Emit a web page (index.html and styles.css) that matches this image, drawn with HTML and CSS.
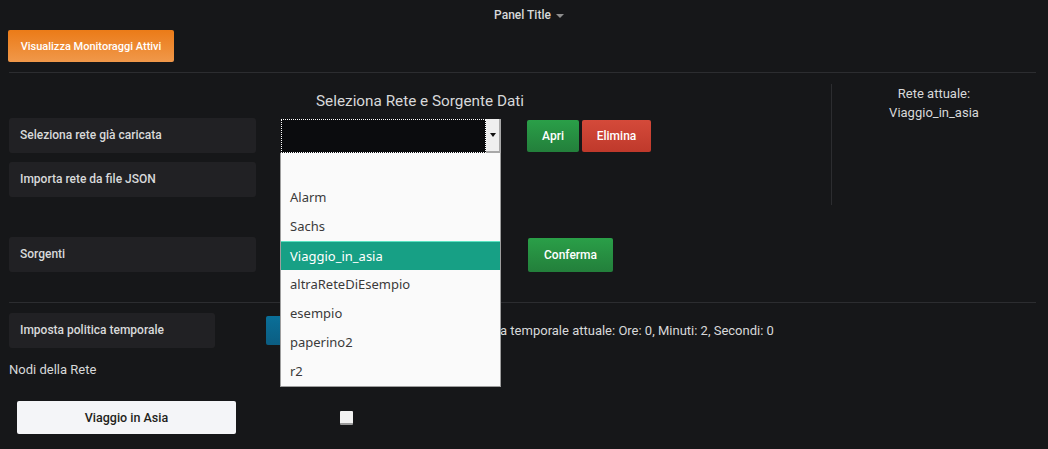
FILE: index.html
```html
<!DOCTYPE html>
<html lang="it">
<head>
<meta charset="utf-8">
<title>Panel</title>
<link rel="stylesheet" href="styles.css">
</head>
<body>
<div class="panel">
  <div class="panel-header">
    <span class="panel-title">Panel Title</span><span class="caret"></span>
  </div>
  <div class="panel-body">
    <div class="top-row">
      <button class="btn btn-orange">Visualizza Monitoraggi Attivi</button>
    </div>
    <div class="hr"></div>
    <div class="section">
      <div class="section-main">
        <div class="section-title">Seleziona Rete e Sorgente Dati</div>
        <div class="form-row row1">
          <div class="label">Seleziona rete già caricata</div>
          <div class="select-wrap">
            <div class="select">
              <div class="select-value"></div>
              <div class="select-arrow"><span class="arrow-glyph"></span></div>
            </div>
            <ul class="dropdown">
              <li class="opt opt-empty"></li>
              <li class="opt">Alarm</li>
              <li class="opt">Sachs</li>
              <li class="opt opt-active">Viaggio_in_asia</li>
              <li class="opt">altraReteDiEsempio</li>
              <li class="opt">esempio</li>
              <li class="opt">paperino2</li>
              <li class="opt">r2</li>
            </ul>
          </div>
          <div class="btn-group">
            <button class="btn btn-green btn-apri">Apri</button>
            <button class="btn btn-red">Elimina</button>
          </div>
        </div>
        <div class="form-row row2">
          <div class="label">Importa rete da file JSON</div>
        </div>
        <div class="form-row row3">
          <div class="label">Sorgenti</div>
          <div class="select-placeholder"></div>
          <button class="btn btn-green btn-conferma">Conferma</button>
        </div>
      </div>
      <div class="section-side">
        <div class="side-line"></div>
        <div class="side-text">
          <div>Rete attuale:</div>
          <div>Viaggio_in_asia</div>
        </div>
      </div>
    </div>
    <div class="hr hr2"></div>
    <div class="time-row">
      <div class="label label-time">Imposta politica temporale</div>
      <button class="btn btn-blue" aria-label="Imposta"></button>
      <span class="time-text">Politica temporale attuale: Ore: 0, Minuti: 2, Secondi: 0</span>
    </div>
    <div class="nodes-title">Nodi della Rete</div>
    <div class="node-row">
      <button class="btn btn-white">Viaggio in Asia</button>
      <span class="checkbox"></span>
    </div>
  </div>
</div>
</body>
</html>
```

FILE: styles.css
```css
* { box-sizing: border-box; }
html, body {
  margin: 0;
  padding: 0;
  background: #161719;
  width: 1048px;
  height: 449px;
  overflow: hidden;
}
body {
  font-family: Roboto, "Liberation Sans", sans-serif;
  color: #d8d9da;
  font-size: 13px;
}
.panel { width: 1048px; height: 449px; }
.panel-header {
  height: 30px;
  display: flex;
  align-items: center;
  justify-content: center;
  padding-left: 10px;
}
.panel-title {
  font-size: 12px;
  font-weight: 500;
  color: #d8d9da;
}
.caret {
  display: inline-block;
  width: 0;
  height: 0;
  margin-left: 5px;
  margin-top: 1px;
  border-left: 4px solid transparent;
  border-right: 4px solid transparent;
  border-top: 4px solid #8e8e8e;
}
.panel-body {
  padding: 0 12px 0 9px;
}
.top-row { display: flex; }
.btn {
  font-family: Roboto, "Liberation Sans", sans-serif;
  border: none;
  border-radius: 2px;
  font-size: 12px;
  font-weight: 500;
  color: #fff;
  padding: 0;
  cursor: pointer;
}
.btn-orange {
  margin-left: -1px;
  width: 166px;
  height: 32px;
  font-size: 11px;
  background: linear-gradient(to bottom, #eb7b18, #f0984a);
}
.hr {
  margin-top: 10px;
  height: 1px;
  background: #2c2d30;
}
.section {
  display: flex;
  height: 198px;
}
.section-main {
  width: 822px;
}
.section-title {
  text-align: center;
  font-size: 15.3px;
  line-height: 18px;
  margin-top: 19px;
  margin-bottom: 8px;
  color: #d8d9da;
}
.form-row {
  display: flex;
  align-items: flex-start;
}
.label {
  width: 247px;
  height: 35px;
  background: #212124;
  border-radius: 3px;
  padding-left: 11px;
  font-size: 12px;
  font-weight: 500;
  line-height: 35px;
  color: #d8d9da;
}
.row2 { margin-top: 9px; }
.row3 { margin-top: 40px; }
.select-wrap {
  position: relative;
  margin-left: 25px;
  margin-top: 1px;
  width: 220px;
}
.select {
  display: flex;
  height: 34px;
}
.select-value {
  width: 205px;
  height: 34px;
  background: #0b0c0e;
  outline: 1px dotted #ffffff;
  outline-offset: -1px;
}
.select-arrow {
  width: 15px;
  height: 34px;
  background: #efefef;
  border-right: 2px solid #a8a8a8;
  border-bottom: 2px solid #a8a8a8;
  display: flex;
  align-items: center;
  justify-content: center;
}
.arrow-glyph {
  width: 0;
  height: 0;
  border-left: 3px solid transparent;
  border-right: 3px solid transparent;
  border-top: 4px solid #111;
}
.dropdown {
  position: absolute;
  top: 34px;
  left: -1px;
  width: 221px;
  margin: 0;
  padding: 0;
  list-style: none;
  background: #fafafa;
  border: 1px solid #9e9e9e;
  border-top: none;
  z-index: 10;
  font-family: "Noto Sans", "Open Sans", sans-serif;
  font-size: 13px;
  letter-spacing: 0;
  color: #3a3a3a;
}
.opt {
  height: 29px;
  line-height: 29px;
  padding-left: 9px;
}
.opt-empty { height: 30px; }
.opt-active {
  background: #17a085;
  color: #ffffff;
  border-top: 1px solid #5be3c2;
  line-height: 28px;
}
.select-placeholder {
  width: 220px;
  height: 34px;
  margin-left: 25px;
  background: #0b0c0e;
}
.btn-group {
  display: flex;
  gap: 3px;
  margin-left: 26px;
  margin-top: 2px;
}
.btn-green {
  background: linear-gradient(to bottom, #2a9f48, #237f3b);
}
.btn-red {
  background: linear-gradient(to bottom, #d44a3a, #bf392b);
  width: 69px;
  height: 32px;
}
.btn-apri { width: 52px; height: 32px; }
.btn-conferma {
  width: 85px;
  height: 34px;
  margin-left: 27px;
  margin-top: 1px;
}
.section-side {
  position: relative;
  flex: 1;
  display: flex;
}
.side-line {
  width: 1px;
  height: 121px;
  margin-top: 11px;
  background: #2c2d30;
}
.side-text {
  flex: 1;
  text-align: center;
  font-size: 13px;
  line-height: 19px;
  padding-top: 11px;
  color: #d8d9da;
}
.hr2 { margin-top: 31px; }
.time-row {
  display: flex;
  align-items: center;
  margin-top: 10px;
  height: 35px;
}
.label-time { width: 206px; }
.btn-blue {
  margin-left: 51px;
  width: 180px;
  height: 29px;
  background: linear-gradient(to bottom, #0a6f98, #0b5d82);
}
.time-text {
  margin-left: 18px;
  font-size: 13px;
  color: #d8d9da;
}
.nodes-title {
  margin-top: 14px;
  font-size: 13px;
  line-height: 16px;
}
.node-row {
  display: flex;
  align-items: center;
  margin-top: 23px;
}
.btn-white {
  margin-left: 8px;
  width: 219px;
  height: 33px;
  background: #f4f5f8;
  color: #1f1f20;
  font-size: 12.5px;
}
.checkbox {
  margin-left: 104px;
  width: 13px;
  height: 14px;
  background: #f2f2f2;
  border-bottom: 2px solid #9a9a9a;
  border-radius: 1px;
}
```
